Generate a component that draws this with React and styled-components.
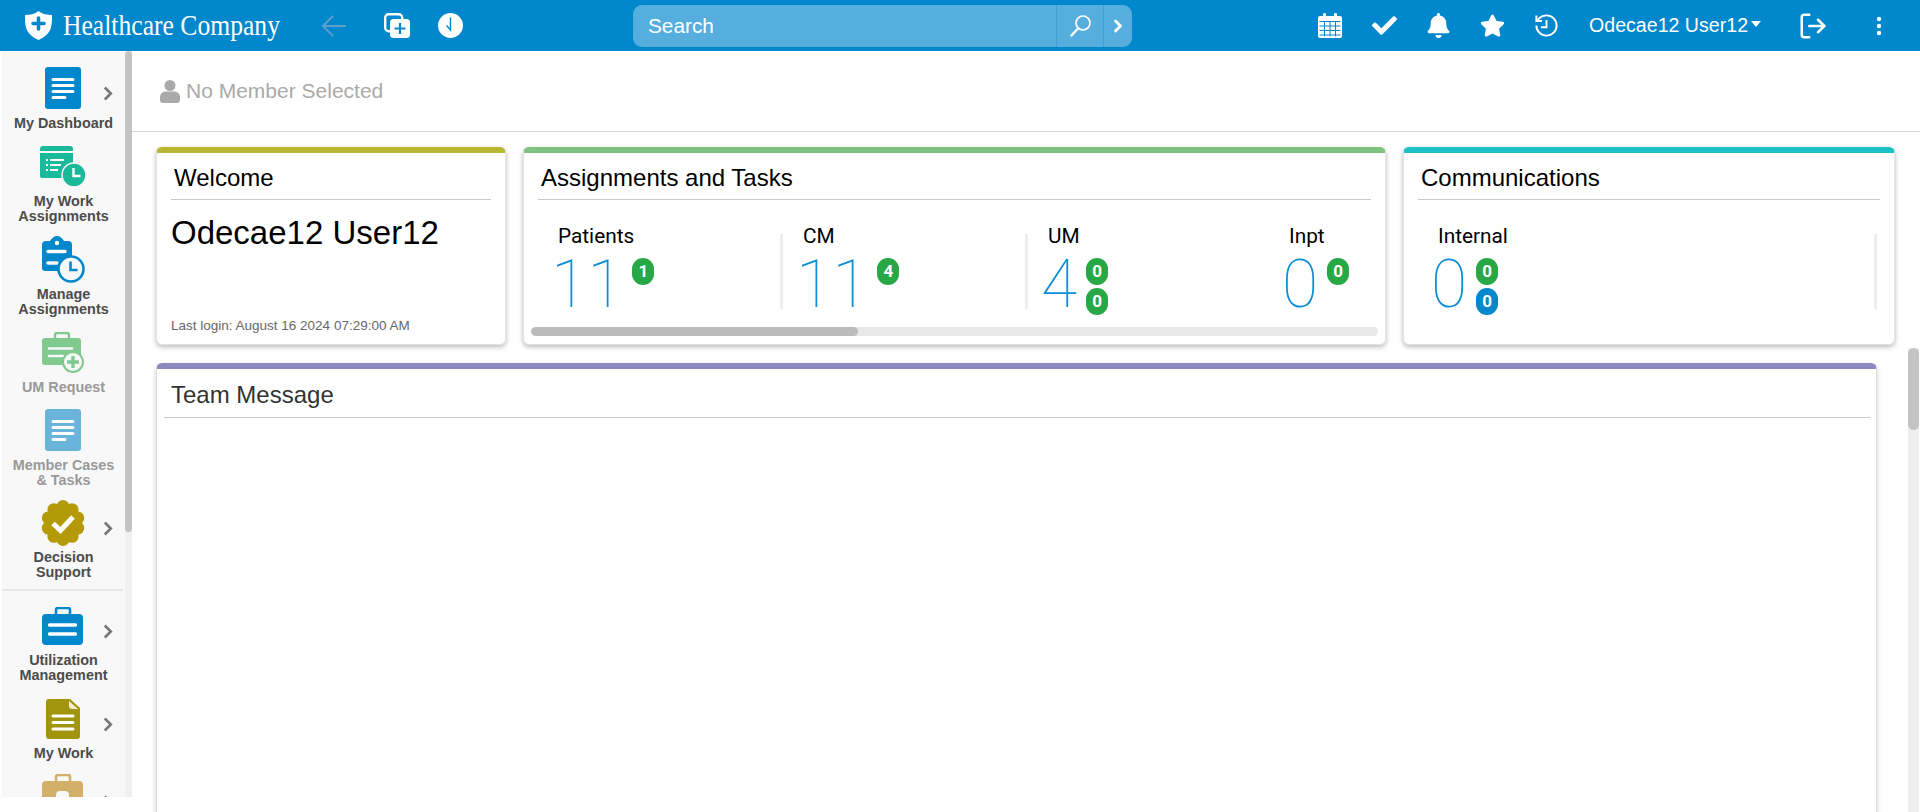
import React from 'react'
import styled, { createGlobalStyle } from 'styled-components'
import { FaBell, FaCheck, FaStar } from 'react-icons/fa'
import { ChevronRight, LogOut } from 'lucide-react'

const Global = createGlobalStyle`
  html, body { margin: 0; padding: 0; background: #fff; }
  body { font-family: "Liberation Sans", Arial, sans-serif; }
`

const Page = styled.div`
  display: flex;
  flex-direction: column;
  height: 100vh;
  overflow: hidden;
`

// top bar
const TopBar = styled.header`
  display: flex;
  align-items: center;
  flex: 0 0 51px;
  background: #0087cc;
  color: #fff;
`
const LeftCluster = styled.div`
  display: flex;
  align-items: center;
  width: 608px;
  padding-left: 25px;
`
const Brand = styled.div`
  width: 217px;
  margin: 0 0 2px 11px;
  font: 30px "Liberation Serif", "Times New Roman", serif;
  white-space: nowrap;
  transform: scaleX(0.854);
  transform-origin: left center;
`
const BarIcon = styled.div`
  display: flex;
  align-items: center;
  justify-content: center;
  width: ${p => p.$w || 54}px;
  margin-left: ${p => p.$ml || 0}px;
`
const SearchBox = styled.div`
  display: flex;
  align-items: stretch;
  width: 499px;
  height: 42px;
  border-radius: 9px;
  background: #55aede;
  overflow: hidden;
`
const SearchText = styled.div`
  flex: 1;
  padding-left: 15px;
  font-size: 20.8px;
  line-height: 41px;
`
const SearchBtn = styled.div`
  display: flex;
  align-items: center;
  justify-content: center;
  width: ${p => p.$w}px;
  border-left: 1px solid #3d9fd5;
`
const RightCluster = styled.div`
  display: flex;
  align-items: center;
  margin-left: 171px;
`
const UserName = styled.div`
  margin-left: 16px;
  width: 160px;
  font-size: 19.6px;
  white-space: nowrap;
`
const Caret = styled.span`
  width: 0;
  height: 0;
  margin-left: 2px;
  margin-top: -3px;
  border-left: 5.5px solid transparent;
  border-right: 5.5px solid transparent;
  border-top: 6px solid #fff;
`

// body
const Body = styled.div`
  display: flex;
  flex: 1;
  min-height: 0;
`
const Sidebar = styled.aside`
  display: flex;
  flex: 0 0 130px;
  height: 746px;
  margin-left: 2px;
  overflow: hidden;
`
const NavList = styled.nav`
  width: 123px;
  padding-top: 12px;
  box-sizing: border-box;
  background: #f8f8f8;
  overflow: hidden;
`
const NavItem = styled.div`
  margin-bottom: ${p => (p.$tight ? 11 : 10)}px;
`
const NavIconRow = styled.div`
  display: grid;
  grid-template-columns: 38px 46px 39px;
  align-items: center;
  height: 50px;
  margin-bottom: ${p => (p.$tight ? 2 : 3)}px;
`
const NavIcon = styled.div`
  grid-column: 2;
  display: flex;
  justify-content: center;
  align-items: center;
`
const NavLabel = styled.div`
  text-align: center;
  font-size: 14.4px;
  font-weight: 700;
  line-height: 15px;
  white-space: nowrap;
  color: ${p => (p.$off ? '#999' : '#4c4c4c')};
`
const NavChevron = styled.svg`
  grid-column: 3;
  margin: 10px 0 0 17px;
`
const NavDivider = styled.div`
  height: 2px;
  margin: -2px 2px 10px 0;
  background: #e4e4e4;
`
const ScrollTrack = styled.div`
  flex: 0 0 ${p => p.$w}px;
  background: #f0f0f0;
`
const ScrollThumb = styled.div`
  height: ${p => p.$h}px;
  border-radius: ${p => p.$w / 2}px;
  background: #c4c4c4;
`
const Main = styled.main`
  flex: 1;
  min-width: 0;
  display: flex;
  flex-direction: column;
  overflow: hidden;
`
const MemberBar = styled.div`
  display: flex;
  align-items: center;
  flex: 0 0 80px;
  padding-left: 28px;
  border-bottom: 1px solid #d6d6d6;
  color: #aaa;
  font-size: 21px;
`
const MemberText = styled.span`
  margin-left: 6px;
`
const CardRow = styled.div`
  display: grid;
  grid-template-columns: 350px 863px 492px;
  gap: 17px;
  margin: 15px 0 0 24px;
`
const Card = styled.section`
  display: flex;
  flex-direction: column;
  box-sizing: border-box;
  height: 198px;
  padding: 0 14px 0 14px;
  border: 1px solid #e4e4e4;
  border-top: 6px solid ${p => p.$accent};
  border-radius: 6px;
  background: #fff;
  box-shadow: 0 2px 5px rgba(0, 0, 0, 0.28);
  overflow: hidden;
`
const CardTitle = styled.div`
  height: 47px;
  padding: 3px 0 0 3px;
  box-sizing: border-box;
  border-bottom: 1px solid #c8c8c8;
  font-size: 24px;
  line-height: 43px;
  color: #000;
  flex-shrink: 0;
`
const WelcomeName = styled.div`
  margin-top: 14px;
  font-size: 33px;
  line-height: 38px;
  color: #000;
`
const LastLogin = styled.div`
  margin-top: auto;
  padding-bottom: 11px;
  font-size: 13.5px;
  color: #666;
`
const StatsRow = styled.div`
  display: flex;
  align-items: flex-start;
  height: 102px;
  margin-top: 25px;
  flex-shrink: 0;
  overflow: hidden;
`
const Stat = styled.div`
  box-sizing: border-box;
  flex: 0 0 ${p => p.$w}px;
  padding-left: ${p => p.$pl ?? 20}px;
`
const StatLabel = styled.div`
  font: 20.8px/23px Roboto, sans-serif;
  color: #000;
`
const StatBody = styled.div`
  display: flex;
  margin-top: 4px;
`
const Digits = styled.div`
  margin-left: -7px;
  font: 100 66px/66px Roboto, sans-serif;
  color: #0b8ed6;
`
const Badges = styled.div`
  display: flex;
  flex-direction: column;
  gap: 3px;
  margin: 6px 0 0 9px;
`
const Badge = styled.span`
  width: 22px;
  height: 27px;
  border-radius: 11px;
  background: ${p => p.$color || '#28a745'};
  color: #fff;
  font: 700 17px/27px Roboto, sans-serif;
  text-align: center;
`
const StatDivider = styled.div`
  flex: 0 0 3px;
  height: 75px;
  margin-top: 9px;
  background: #eee;
`
const HScroll = styled.div`
  height: 9px;
  margin: 0 -7px;
  border-radius: 5px;
  background: #e8e8e8;
  overflow: hidden;
`
const HThumb = styled.div`
  width: 327px;
  height: 100%;
  border-radius: 5px;
  background: #bbb;
`
const TeamRow = styled.div`
  display: flex;
  flex: 1;
  min-height: 0;
  margin: 18px 0 0 24px;
`
const TeamCard = styled.section`
  flex: 0 0 1721px;
  box-sizing: border-box;
  height: 600px;
  padding: 0 6px 0 7px;
  border: 1px solid #dcdcdc;
  border-top: 6px solid #8f89c2;
  border-radius: 6px;
  box-shadow: 0 2px 5px rgba(0, 0, 0, 0.2);
`
const TeamTitle = styled.div`
  height: 49px;
  padding-left: 7px;
  border-bottom: 1px solid #c8c8c8;
  box-sizing: border-box;
  font-size: 24px;
  line-height: 51px;
  color: #333;
`
const PageScroll = styled.div`
  flex: 0 0 11px;
  height: 600px;
  margin: -15px 0 0 31px;
  background: #eee;
`

// drawn icons
const Shield = () => (
  <svg width="27" height="29" viewBox="0 0 27 29">
    <path d="M13.5 0C9.5 3 5 4 0 4c0 0 -.5 8 1.5 14 2 5 6.500 8.500 12 11 5.500-2.500 10-6 12-11 2-6 1.500-14 1.500-14-5 0-9.500-1-13.500-4z" fill="#fff" />
    <path d="M13.500 7v11M8 12.500h11" stroke="#0087cc" strokeWidth="3.6" strokeLinecap="round" />
  </svg>
)
const BackArrow = () => (
  <svg width="27" height="24" viewBox="0 0 27 24">
    <path d="M26 12H2M12.500 1.500L2 12l10.500 10.500" fill="none" stroke="#5b9fc8" strokeWidth="2.200" />
  </svg>
)
const CopyPlus = () => (
  <svg width="26" height="25" viewBox="0 0 26 25">
    <rect x="1.200" y="1.200" width="17" height="17" rx="3.500" fill="none" stroke="#fff" strokeWidth="2.400" />
    <rect x="6" y="6" width="20" height="19" rx="3.500" fill="#fff" />
    <path d="M16 10v11M10.500 15.500h11" stroke="#0087cc" strokeWidth="2.200" />
  </svg>
)
const ClockFill = () => (
  <svg width="25" height="25" viewBox="0 0 25 25">
    <circle cx="12.500" cy="12.500" r="12.500" fill="#fff" />
    <path d="M12.500 4.500v12.500L8.500 12.500" fill="none" stroke="#0087cc" strokeWidth="1.400" />
  </svg>
)
const SearchGlass = () => (
  <svg width="21" height="22" viewBox="0 0 21 22">
    <circle cx="13" cy="8" r="7" fill="none" stroke="#fff" strokeWidth="1.700" />
    <path d="M8 13.500L1.500 20.500" stroke="#fff" strokeWidth="2.400" strokeLinecap="round" />
  </svg>
)
const Calendar = () => (
  <svg width="24" height="25" viewBox="0 0 24 25">
    <path d="M2 3h20a2 2 0 0 1 2 2v18a2 2 0 0 1-2 2H2a2 2 0 0 1-2-2V5a2 2 0 0 1 2-2z" fill="#fff" />
    <rect x="5" y="0" width="3" height="6" rx="1.200" fill="#fff" />
    <rect x="16" y="0" width="3" height="6" rx="1.200" fill="#fff" />
    <path d="M1.500 8.500h21M1.500 13h21M1.500 17.500h21M1.500 22h21M6.500 8.500V23.500M12 8.500V23.500M17.500 8.500V23.500" stroke="#0087cc" strokeWidth="1" fill="none" />
  </svg>
)
const HistoryClock = () => (
  <svg width="27" height="27" viewBox="0 0 24 24" fill="none" stroke="#fff" strokeWidth="1.700">
    <path d="M3 12a9 9 0 1 0 9-9 9.750 9.750 0 0 0-6.740 2.740L3 8" />
    <path d="M3 3v5h5" />
    <path d="M12 7v6.500H7" />
  </svg>
)
const Kebab = () => (
  <svg width="6" height="20" viewBox="0 0 6 20">
    <circle cx="3" cy="3" r="2.200" fill="#fff" />
    <circle cx="3" cy="10" r="2.200" fill="#fff" />
    <circle cx="3" cy="17" r="2.200" fill="#fff" />
  </svg>
)
const Person = () => (
  <svg width="20" height="23" viewBox="0 0 20 23">
    <circle cx="10" cy="5.500" r="5.500" fill="#aaa" />
    <path d="M0 20v-3c0-3.500 3-5.500 6-5.500h8c3 0 6 2 6 5.500v3c0 1.800-1.200 3-3 3H3c-1.800 0-3-1.200-3-3z" fill="#aaa" />
  </svg>
)
const Chevron = () => (
  <NavChevron width="10" height="15" viewBox="0 0 10 15">
    <path d="M1.800 1.500l6 6-6 6" fill="none" stroke="#777" strokeWidth="2.600" />
  </NavChevron>
)
const DocIcon = ({ color }) => (
  <svg width="36" height="42" viewBox="0 0 36 42">
    <rect width="36" height="42" rx="3" fill={color} />
    <path d="M8 12.500h20M8 18.500h20M8 24.500h20M8 30.500h12" stroke="#fff" strokeWidth="3" strokeLinecap="round" />
  </svg>
)
const WorkIcon = () => (
  <svg width="46" height="41" viewBox="0 0 46 41">
    <path d="M3 0h27a3 3 0 0 1 3 3v2H0V3a3 3 0 0 1 3-3z" fill="#1ab99a" />
    <path d="M0 7h33v23a2 2 0 0 1-2 2H2a2 2 0 0 1-2-2z" fill="#1ab99a" />
    <path d="M6 14h2M6 19h2M6 24h2M10 14h14M10 19h11M10 24h8" stroke="#fff" strokeWidth="1.800" />
    <circle cx="34" cy="29" r="12" fill="#1ab99a" stroke="#f8f8f8" strokeWidth="1.500" />
    <path d="M33.500 22v8h7" fill="none" stroke="#fff" strokeWidth="2.400" />
  </svg>
)
const ManageIcon = () => (
  <svg width="43" height="47" viewBox="0 0 43 47">
    <path d="M15 0c3 0 5 2 7 5h4a4 4 0 0 1 4 4v22a4 4 0 0 1-4 4H3a3 3 0 0 1-3-3V9a4 4 0 0 1 4-4h4c2-3 4-5 7-5z" fill="#0087cc" />
    <circle cx="15" cy="7" r="2.200" fill="#f8f8f8" />
    <path d="M6 15.500h17M6 27h9" stroke="#f8f8f8" strokeWidth="3.500" strokeLinecap="round" />
    <circle cx="29" cy="33" r="12.500" fill="#f8f8f8" stroke="#0087cc" strokeWidth="2.600" />
    <path d="M28.500 25.500v8.500h7" fill="none" stroke="#0087cc" strokeWidth="2.600" />
  </svg>
)
const UmRequestIcon = () => (
  <svg width="42" height="41" viewBox="0 0 42 41">
    <path d="M13 6V3a2 2 0 0 1 2-2h10a2 2 0 0 1 2 2v3" fill="none" stroke="#80c98f" strokeWidth="2.400" />
    <path d="M3 6h33a3 3 0 0 1 3 3v21a3 3 0 0 1-3 3H3a3 3 0 0 1-3-3V9a3 3 0 0 1 3-3z" fill="#80c98f" />
    <path d="M7 16.500h23M7 24h14" stroke="#f8f8f8" strokeWidth="2.600" strokeLinecap="round" />
    <circle cx="31" cy="30" r="10" fill="#f8f8f8" stroke="#80c98f" strokeWidth="2" />
    <path d="M31 24v12M25 30h12" stroke="#80c98f" strokeWidth="3.400" />
  </svg>
)
const scallops = Array.from({ length: 10 }, (_, i) => (i * Math.PI) / 5)
const DecisionIcon = () => (
  <svg width="44" height="46" viewBox="0 0 44 46">
    <circle cx="22" cy="23" r="19" fill="#b59a08" />
    {scallops.map((a, i) => (
      <circle key={i} cx={22 + 15.500 * Math.sin(a)} cy={23 - 16.500 * Math.cos(a)} r="6.500" fill="#b59a08" />
    ))}
    <path d="M12 23.500l7.500 7L32 17" fill="none" stroke="#fff" strokeWidth="5" />
  </svg>
)
const BriefcaseIcon = ({ color }) => (
  <svg width="42" height="38" viewBox="0 0 42 38">
    <path d="M14 9V3a2 2 0 0 1 2-2h10a2 2 0 0 1 2 2v6" fill="none" stroke={color} strokeWidth="2.600" />
    <rect y="7" width="41" height="31" rx="4" fill={color} />
    <path d="M7.500 18h26M7.500 27h26" stroke="#fff" strokeWidth="3.400" strokeLinecap="round" />
  </svg>
)
const FoldDocIcon = () => (
  <svg width="34" height="40" viewBox="0 0 34 40">
    <path d="M3 0h21l10 9v28a3 3 0 0 1-3 3H3a3 3 0 0 1-3-3V3a3 3 0 0 1 3-3z" fill="#a0950c" />
    <path d="M23 2l9 8h-6a3 3 0 0 1-3-3z" fill="#f0eed0" />
    <path d="M7 17h20M7 23.500h20M7 30h20" stroke="#fff" strokeWidth="3" strokeLinecap="round" />
  </svg>
)
const TanCaseIcon = () => (
  <svg width="42" height="46" viewBox="0 0 42 46">
    <path d="M14 9V3a2 2 0 0 1 2-2h10a2 2 0 0 1 2 2v6" fill="none" stroke="#d2b06a" strokeWidth="2.600" />
    <rect y="7" width="41" height="36" rx="4" fill="#d2b06a" />
    <rect x="14" y="17" width="13" height="9" rx="4" fill="#f8f8f8" />
  </svg>
)

const navGroups = [
  { icon: <DocIcon color="#0087cc" />, label: ['My Dashboard'], more: true },
  { icon: <WorkIcon />, label: ['My Work', 'Assignments'] },
  { icon: <ManageIcon />, label: ['Manage', 'Assignments'] },
  { icon: <UmRequestIcon />, label: ['UM Request'], off: true },
  { icon: <DocIcon color="#6ab4dc" />, label: ['Member Cases', '& Tasks'], off: true },
  { icon: <DecisionIcon />, label: ['Decision', 'Support'], more: true, split: true, tight: true },
  { icon: <BriefcaseIcon color="#0087cc" />, label: ['Utilization', 'Management'], more: true, tight: true },
  { icon: <FoldDocIcon />, label: ['My Work'], more: true, tight: true },
  { icon: <TanCaseIcon />, label: [''], more: true },
]

const Stats = ({ label, value, badges, w, pl }) => (
  <Stat $w={w} $pl={pl}>
    <StatLabel>{label}</StatLabel>
    <StatBody>
      <Digits>{value}</Digits>
      <Badges>
        {badges.map((b, i) => (
          <Badge key={i} $color={b.color}>{b.n}</Badge>
        ))}
      </Badges>
    </StatBody>
  </Stat>
)

const App = () => (
  <Page>
    <Global />
    <TopBar>
      <LeftCluster>
        <Shield />
        <Brand>Healthcare Company</Brand>
        <BarIcon $w={26} $ml={41}><BackArrow /></BarIcon>
        <BarIcon $w={26} $ml={37}><CopyPlus /></BarIcon>
        <BarIcon $w={25} $ml={28}><ClockFill /></BarIcon>
      </LeftCluster>
      <SearchBox>
        <SearchText>Search</SearchText>
        <SearchBtn $w={46}><SearchGlass /></SearchBtn>
        <SearchBtn $w={28}><ChevronRight size={20} color="#fff" strokeWidth={3.500} /></SearchBtn>
      </SearchBox>
      <RightCluster>
        <BarIcon><Calendar /></BarIcon>
        <BarIcon><FaCheck size={25} /></BarIcon>
        <BarIcon><FaBell size={25} /></BarIcon>
        <BarIcon><FaStar size={25} /></BarIcon>
        <BarIcon><HistoryClock /></BarIcon>
        <UserName>Odecae12 User12</UserName>
        <Caret />
        <BarIcon $w={30} $ml={37}><LogOut size={30} strokeWidth={2} /></BarIcon>
        <BarIcon $w={6} $ml={48}><Kebab /></BarIcon>
      </RightCluster>
    </TopBar>
    <Body>
      <Sidebar>
        <NavList>
          {navGroups.map((g, i) => (
            <React.Fragment key={i}>
              <NavItem $tight={g.tight}>
                <NavIconRow $tight={g.tight}>
                  <NavIcon>{g.icon}</NavIcon>
                  {g.more && <Chevron />}
                </NavIconRow>
                <NavLabel $off={g.off}>
                  {g.label.map((l, j) => <div key={j}>{l}</div>)}
                </NavLabel>
              </NavItem>
              {g.split && <NavDivider />}
            </React.Fragment>
          ))}
        </NavList>
        <ScrollTrack $w={7}><ScrollThumb $w={7} $h={481} /></ScrollTrack>
      </Sidebar>
      <Main>
        <MemberBar>
          <Person />
          <MemberText>No Member Selected</MemberText>
        </MemberBar>
        <CardRow>
          <Card $accent="#b9b731">
            <CardTitle>Welcome</CardTitle>
            <WelcomeName>Odecae12 User12</WelcomeName>
            <LastLogin>Last login: August 16 2024 07:29:00 AM</LastLogin>
          </Card>
          <Card $accent="#7fc281">
            <CardTitle>Assignments and Tasks</CardTitle>
            <StatsRow>
              <Stats w={242} label="Patients" value="11" badges={[{ n: 1 }]} />
              <StatDivider />
              <Stats w={242} label="CM" value="11" badges={[{ n: 4 }]} />
              <StatDivider />
              <Stats w={245} label="UM" value="4" badges={[{ n: 0 }, { n: 0 }]} />
              <Stats w={120} pl={16} label="Inpt" value="0" badges={[{ n: 0 }]} />
            </StatsRow>
            <HScroll><HThumb /></HScroll>
          </Card>
          <Card $accent="#1cc1c5">
            <CardTitle>Communications</CardTitle>
            <StatsRow>
              <Stats w={456} label="Internal" value="0" badges={[{ n: 0 }, { n: 0, color: '#0087cc' }]} />
              <StatDivider />
            </StatsRow>
          </Card>
        </CardRow>
        <TeamRow>
          <TeamCard>
            <TeamTitle>Team Message</TeamTitle>
          </TeamCard>
          <PageScroll><ScrollThumb $w={11} $h={82} /></PageScroll>
        </TeamRow>
      </Main>
    </Body>
  </Page>
)

export default App
